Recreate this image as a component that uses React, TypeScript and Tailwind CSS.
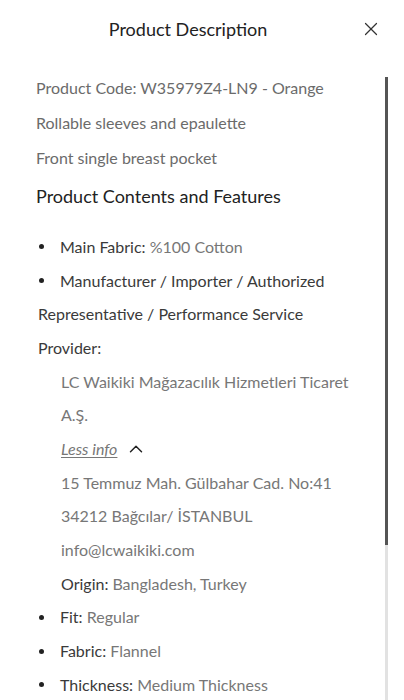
import { X, ChevronUp } from 'lucide-react';

const font = { fontFamily: 'Lato, "Noto Sans", sans-serif' };

function Bullet({ children }: { children: React.ReactNode }) {
  return (
    <div className="flex items-center h-[33.7px]">
      <span className="w-[5px] h-[5px] rounded-full bg-[#222] ml-[39px] mr-[16px] shrink-0" />
      <span className="whitespace-nowrap">{children}</span>
    </div>
  );
}

function Line({ children, indent }: { children: React.ReactNode; indent?: boolean }) {
  return (
    <div className={`flex items-center h-[33.7px] whitespace-nowrap ${indent ? 'pl-[61px]' : 'pl-[38px]'}`}>
      {children}
    </div>
  );
}

export default function App() {
  return (
    <div className="w-[404px] h-[700px] bg-white overflow-hidden text-[16px]" style={font}>
      <div className="relative h-[58px] flex items-center justify-center pr-[28px]">
        <h1 className="text-[18px] text-[#222]">Product Description</h1>
        <button className="absolute right-[22px] top-[18px] text-[#333]">
          <X size={22} strokeWidth={1.3} />
        </button>
      </div>
      <div className="flex">
        <div className="flex-1 pt-[12px]">
          <div className="pl-[36px] text-[#6b6b6b]">
            <div className="h-[35px] flex items-center">Product Code: W35979Z4-LN9 - Orange</div>
            <div className="h-[35px] flex items-center">Rollable sleeves and epaulette</div>
            <div className="h-[35px] flex items-center">Front single breast pocket</div>
          </div>
          <div className="pl-[36px] h-[39px] pt-[4px] flex items-center text-[18px] text-[#222]">Product Contents and Features</div>
          <div className="pt-[16px] text-[#3a3a3a]">
            <Bullet>Main Fabric: <span className="text-[#777]">%100 Cotton</span></Bullet>
            <Bullet>Manufacturer / Importer / Authorized</Bullet>
            <Line>Representative / Performance Service</Line>
            <Line>Provider:</Line>
            <div className="text-[#777]">
              <Line indent>LC Waikiki Mağazacılık Hizmetleri Ticaret</Line>
              <Line indent>A.Ş.</Line>
              <Line indent>
                <span className="italic underline underline-offset-2">Less info</span>
                <ChevronUp size={22} strokeWidth={1.6} className="ml-[8px] text-[#222]" />
              </Line>
              <Line indent>15 Temmuz Mah. Gülbahar Cad. No:41</Line>
              <Line indent>34212 Bağcılar/ İSTANBUL</Line>
              <Line indent>info@lcwaikiki.com</Line>
            </div>
            <Line indent>Origin: <span className="text-[#777] ml-1">Bangladesh, Turkey</span></Line>
            <Bullet>Fit: <span className="text-[#777]">Regular</span></Bullet>
            <Bullet>Fabric: <span className="text-[#777]">Flannel</span></Bullet>
            <Bullet>Thickness: <span className="text-[#777]">Medium Thickness</span></Bullet>
          </div>
        </div>
        <div className="w-[3px] mr-[16px] mt-[19px] h-[640px] bg-[#e2e2e2] flex flex-col">
          <div className="h-[468px] bg-[#555]" />
        </div>
      </div>
    </div>
  );
}
